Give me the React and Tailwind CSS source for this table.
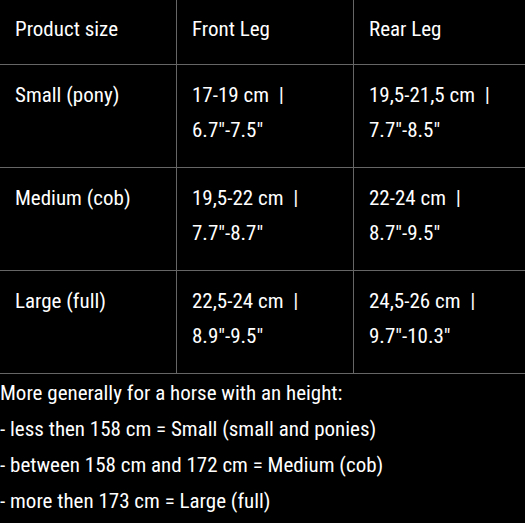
import React from "react";

const rows = [
  ["Small (pony)", ["17-19 cm\u00a0 |", "6.7\"-7.5\""], ["19,5-21,5 cm\u00a0 |", "7.7\"-8.5\""]],
  ["Medium (cob)", ["19,5-22 cm\u00a0 |", "7.7\"-8.7\""], ["22-24 cm\u00a0 |", "8.7\"-9.5\""]],
  ["Large (full)", ["22,5-24 cm\u00a0 |", "8.9\"-9.5\""], ["24,5-26 cm\u00a0 |", "9.7\"-10.3\""]],
];

export default function App() {
  return (
    <div
      className="w-[525px] h-[523px] bg-black text-white overflow-hidden font-stretch-condensed"
      style={{ fontFamily: 'Roboto, "DejaVu Sans Condensed", sans-serif' }}
    >
      <div className="grid grid-cols-[176px_177px_172px] text-[21px] leading-[35px]">
        <div className="h-[65px] pl-[15px] pt-[12px] border-b border-[#666]">Product size</div>
        <div className="h-[65px] pl-[15px] pt-[12px] border-b border-l border-[#666]">Front Leg</div>
        <div className="h-[65px] pl-[15px] pt-[12px] border-b border-l border-[#666]">Rear Leg</div>
        {rows.map((r) => (
          <React.Fragment key={r[0]}>
            <div className="h-[103px] pl-[15px] pt-[13px] border-b border-[#666]">{r[0]}</div>
            <div className="h-[103px] pl-[15px] pt-[13px] border-b border-l border-[#666]">
              <div>{r[1][0]}</div>
              <div>{r[1][1]}</div>
            </div>
            <div className="h-[103px] pl-[15px] pt-[13px] border-b border-l border-[#666]">
              <div>{r[2][0]}</div>
              <div>{r[2][1]}</div>
            </div>
          </React.Fragment>
        ))}
      </div>
      <div className="text-[21px] leading-[36px] pt-[1px]">
        <div>More generally for a horse with an height:</div>
        <div>- less then 158 cm = Small (small and ponies)</div>
        <div>- between 158 cm and 172 cm = Medium (cob)</div>
        <div>- more then 173 cm = Large (full)</div>
      </div>
    </div>
  );
}
